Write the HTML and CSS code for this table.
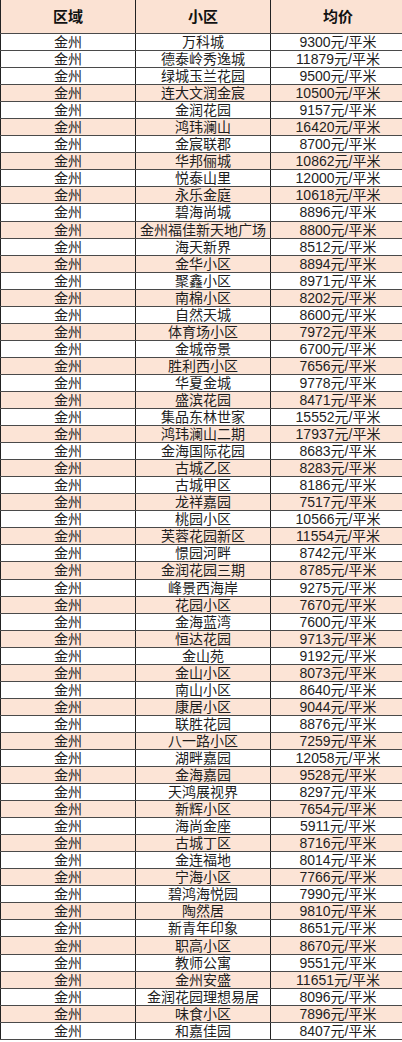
FILE: index.html
```html
<!DOCTYPE html>
<html lang="zh-CN">
<head>
<meta charset="utf-8">
<title>金州小区均价</title>
<link rel="stylesheet" href="styles.css">
</head>
<body>
<table class="price-table">
<thead>
<tr class="head-row"><th>区域</th><th>小区</th><th>均价</th></tr>
</thead>
<tbody>
<tr><td>金州</td><td>万科城</td><td>9300元/平米</td></tr>
<tr><td>金州</td><td>德泰岭秀逸城</td><td>11879元/平米</td></tr>
<tr><td>金州</td><td>绿城玉兰花园</td><td>9500元/平米</td></tr>
<tr class="alt"><td>金州</td><td>连大文润金宸</td><td>10500元/平米</td></tr>
<tr><td>金州</td><td>金润花园</td><td>9157元/平米</td></tr>
<tr class="alt"><td>金州</td><td>鸿玮澜山</td><td>16420元/平米</td></tr>
<tr><td>金州</td><td>金宸联郡</td><td>8700元/平米</td></tr>
<tr class="alt"><td>金州</td><td>华邦俪城</td><td>10862元/平米</td></tr>
<tr><td>金州</td><td>悦泰山里</td><td>12000元/平米</td></tr>
<tr class="alt"><td>金州</td><td>永乐金庭</td><td>10618元/平米</td></tr>
<tr><td>金州</td><td>碧海尚城</td><td>8896元/平米</td></tr>
<tr class="alt"><td>金州</td><td>金州福佳新天地广场</td><td>8800元/平米</td></tr>
<tr><td>金州</td><td>海天新界</td><td>8512元/平米</td></tr>
<tr class="alt"><td>金州</td><td>金华小区</td><td>8894元/平米</td></tr>
<tr><td>金州</td><td>聚鑫小区</td><td>8971元/平米</td></tr>
<tr class="alt"><td>金州</td><td>南棉小区</td><td>8202元/平米</td></tr>
<tr><td>金州</td><td>自然天城</td><td>8600元/平米</td></tr>
<tr class="alt"><td>金州</td><td>体育场小区</td><td>7972元/平米</td></tr>
<tr><td>金州</td><td>金城帝景</td><td>6700元/平米</td></tr>
<tr class="alt"><td>金州</td><td>胜利西小区</td><td>7656元/平米</td></tr>
<tr><td>金州</td><td>华夏金城</td><td>9778元/平米</td></tr>
<tr class="alt"><td>金州</td><td>盛滨花园</td><td>8471元/平米</td></tr>
<tr><td>金州</td><td>集品东林世家</td><td>15552元/平米</td></tr>
<tr class="alt"><td>金州</td><td>鸿玮澜山二期</td><td>17937元/平米</td></tr>
<tr><td>金州</td><td>金海国际花园</td><td>8683元/平米</td></tr>
<tr class="alt"><td>金州</td><td>古城乙区</td><td>8283元/平米</td></tr>
<tr><td>金州</td><td>古城甲区</td><td>8186元/平米</td></tr>
<tr class="alt"><td>金州</td><td>龙祥嘉园</td><td>7517元/平米</td></tr>
<tr><td>金州</td><td>桃园小区</td><td>10566元/平米</td></tr>
<tr class="alt"><td>金州</td><td>芙蓉花园新区</td><td>11554元/平米</td></tr>
<tr><td>金州</td><td>憬园河畔</td><td>8742元/平米</td></tr>
<tr class="alt"><td>金州</td><td>金润花园三期</td><td>8785元/平米</td></tr>
<tr><td>金州</td><td>峰景西海岸</td><td>9275元/平米</td></tr>
<tr class="alt"><td>金州</td><td>花园小区</td><td>7670元/平米</td></tr>
<tr><td>金州</td><td>金海蓝湾</td><td>7600元/平米</td></tr>
<tr class="alt"><td>金州</td><td>恒达花园</td><td>9713元/平米</td></tr>
<tr><td>金州</td><td>金山苑</td><td>9192元/平米</td></tr>
<tr class="alt"><td>金州</td><td>金山小区</td><td>8073元/平米</td></tr>
<tr><td>金州</td><td>南山小区</td><td>8640元/平米</td></tr>
<tr class="alt"><td>金州</td><td>康居小区</td><td>9044元/平米</td></tr>
<tr><td>金州</td><td>联胜花园</td><td>8876元/平米</td></tr>
<tr class="alt"><td>金州</td><td>八一路小区</td><td>7259元/平米</td></tr>
<tr><td>金州</td><td>湖畔嘉园</td><td>12058元/平米</td></tr>
<tr class="alt"><td>金州</td><td>金海嘉园</td><td>9528元/平米</td></tr>
<tr><td>金州</td><td>天鸿展视界</td><td>8297元/平米</td></tr>
<tr class="alt"><td>金州</td><td>新辉小区</td><td>7654元/平米</td></tr>
<tr><td>金州</td><td>海尚金座</td><td>5911元/平米</td></tr>
<tr class="alt"><td>金州</td><td>古城丁区</td><td>8716元/平米</td></tr>
<tr><td>金州</td><td>金连福地</td><td>8014元/平米</td></tr>
<tr class="alt"><td>金州</td><td>宁海小区</td><td>7766元/平米</td></tr>
<tr><td>金州</td><td>碧鸿海悦园</td><td>7990元/平米</td></tr>
<tr class="alt"><td>金州</td><td>陶然居</td><td>9810元/平米</td></tr>
<tr><td>金州</td><td>新青年印象</td><td>8651元/平米</td></tr>
<tr class="alt"><td>金州</td><td>职高小区</td><td>8670元/平米</td></tr>
<tr><td>金州</td><td>教师公寓</td><td>9551元/平米</td></tr>
<tr class="alt"><td>金州</td><td>金州安盛</td><td>11651元/平米</td></tr>
<tr><td>金州</td><td>金润花园理想易居</td><td>8096元/平米</td></tr>
<tr class="alt"><td>金州</td><td>味食小区</td><td>7896元/平米</td></tr>
<tr><td>金州</td><td>和嘉佳园</td><td>8407元/平米</td></tr>
</tbody>
</table>
</body>
</html>
```

FILE: styles.css
```css
html, body {
  margin: 0;
  padding: 0;
  background: #ffffff;
}

body {
  font-family: "Liberation Sans", "Noto Sans CJK SC", sans-serif;
  color: #1e1e1e;
}

.price-table {
  border-collapse: collapse;
  table-layout: fixed;
  width: 402px;
}

.price-table th,
.price-table td {
  width: 134px;
  padding: 0;
  text-align: center;
  vertical-align: middle;
  border-left: 1px solid #222;
  border-bottom: 1px solid #4a4a4a;
  white-space: nowrap;
  overflow: hidden;
}

.price-table th:last-child,
.price-table td:last-child {
  border-right: none;
}

.head-row th {
  height: 33px;
  background: #fbe2d3;
  font-size: 15px;
  font-weight: bold;
  line-height: 18px;
  color: #111;
}

.price-table td {
  height: 16.06px;
  font-size: 14px;
  line-height: 16px;
}

.price-table tr.alt td {
  background: #fce4d6;
}
```
